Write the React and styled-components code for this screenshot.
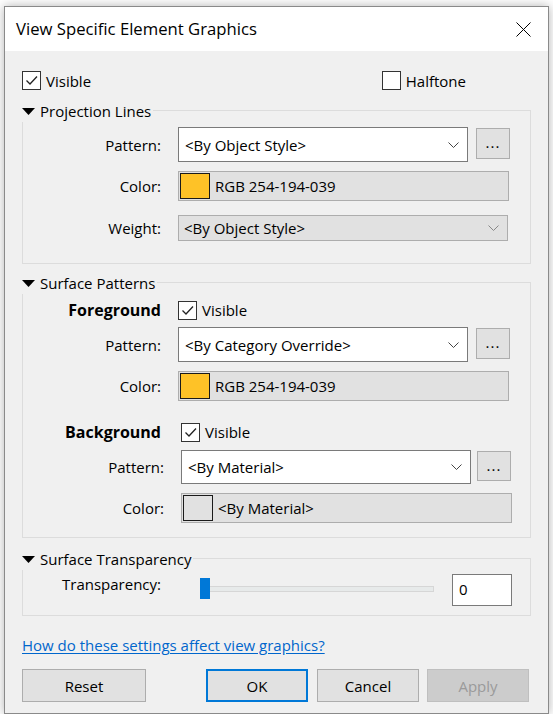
import React from 'react';
import styled, { createGlobalStyle } from 'styled-components';

const GlobalStyle = createGlobalStyle`
  html, body {
    margin: 0;
    padding: 0;
    background: #ffffff;
  }
  body {
    font-family: "Open Sans", "Noto Sans", sans-serif;
    font-size: 15px;
    color: #000;
  }
  * {
    box-sizing: border-box;
  }
`;

const Page = styled.div`
  padding: 6px 0 0 4px;
`;

const Window = styled.div`
  width: 545px;
  height: 708px;
  border: 1px solid #8a8a8a;
  background: #f0f0f0;
  box-shadow: 0 0 10px rgba(0, 0, 0, 0.3);
  display: flex;
  flex-direction: column;
`;

const TitleBar = styled.div`
  height: 44px;
  background: #fff;
  display: flex;
  align-items: center;
  justify-content: space-between;
  padding: 0 17px 0 11px;
  line-height: 20px;
`;

const Title = styled.span`
  font-size: 16.7px;
`;

const Body = styled.div`
  flex: 1;
  padding: 20px 17px 0 17px;
`;

const TopRow = styled.div`
  display: flex;
  align-items: center;
  height: 19px;
`;

const CheckItem = styled.label`
  display: flex;
  align-items: center;
  gap: 5px;
  line-height: 20px;
  margin-left: ${p => (p.$push ? 'auto' : '0')};
  margin-right: ${p => p.$right || 0}px;
`;

const Box = styled.span`
  width: 19px;
  height: 19px;
  border: 1px solid #333;
  background: #fff;
  display: flex;
  align-items: center;
  justify-content: center;
  flex-shrink: 0;
`;

const Group = styled.div`
  margin-top: ${p => p.$top}px;
  border: 1px solid #dcdcdc;
  padding-bottom: ${p => p.$bottom}px;
`;

const Legend = styled.div`
  display: flex;
  align-items: center;
  gap: 5px;
  width: fit-content;
  height: 22px;
  margin: -11px 0 0 -1px;
  padding-right: 2px;
  background: #f0f0f0;
  line-height: 20px;
`;

const Row = styled.div`
  display: flex;
  align-items: center;
  margin-top: ${p => p.$top}px;
`;

const Label = styled.div`
  width: ${p => p.$w || 138}px;
  flex-shrink: 0;
  margin-right: ${p => (p.$gap === undefined ? 17 : p.$gap)}px;
  text-align: right;
  line-height: 20px;
  font-size: ${p => (p.$bold ? 16 : 15)}px;
  font-weight: ${p => (p.$bold ? 700 : 400)};
  align-self: ${p => (p.$top ? 'flex-start' : 'center')};
`;

const Select = styled.div`
  display: flex;
  align-items: center;
  justify-content: space-between;
  width: ${p => p.$w}px;
  height: ${p => p.$h}px;
  padding: 0 8px 0 ${p => (p.$disabled ? 5 : 6)}px;
  background: ${p => (p.$disabled ? '#e1e1e1' : '#fff')};
  border: 1px solid ${p => (p.$disabled ? '#adadad' : '#7a7a7a')};
  line-height: 20px;
  white-space: nowrap;
`;

const MoreButton = styled.button`
  width: 34px;
  height: ${p => p.$h}px;
  margin-left: ${p => p.$gap}px;
  align-self: flex-start;
  margin-top: 1px;
  padding: 0 0 3px;
  background: #e1e1e1;
  border: 1px solid #adadad;
  font: inherit;
  font-size: 15px;
  letter-spacing: 1px;
  color: #000;
`;

const ColorField = styled.div`
  display: flex;
  align-items: center;
  gap: 5px;
  width: 331px;
  height: 30px;
  padding: 0 1px;
  background: #e1e1e1;
  border: 1px solid #adadad;
  line-height: 20px;
`;

const Swatch = styled.span`
  width: 30px;
  height: 26px;
  border: 1px solid #1a1a1a;
  background: ${p => p.$color};
  flex-shrink: 0;
`;

const Slider = styled.div`
  position: relative;
  align-self: flex-start;
  width: 234px;
  height: 21px;
  margin: 4px 0 0 22px;
`;

const Track = styled.div`
  margin-top: 8px;
  height: 6px;
  background: #e7eaea;
  border: 1px solid #d6d6d6;
`;

const Thumb = styled.div`
  position: absolute;
  left: 0;
  top: 0;
  width: 10px;
  height: 21px;
  background: #0078d7;
`;

const NumberBox = styled.div`
  width: 60px;
  height: 32px;
  margin-left: 18px;
  padding: 4px 6px;
  background: #fff;
  border: 1px solid #7a7a7a;
  line-height: 20px;
`;

const HelpLink = styled.a`
  display: block;
  width: fit-content;
  margin-top: 19px;
  line-height: 20px;
  color: #0066cc;
  text-decoration: underline;
  text-underline-offset: 2px;
`;

const ButtonRow = styled.div`
  display: flex;
  margin-top: 14px;
`;

const Button = styled.button`
  width: ${p => p.$w || 102}px;
  height: 33px;
  margin-left: ${p => p.$gap || 0}px;
  font: inherit;
  color: ${p => (p.$disabled ? '#9a9a9a' : '#000')};
  background: ${p => (p.$disabled ? '#cccccc' : '#e1e1e1')};
  border: ${p => (p.$primary ? '2px solid #0078d7' : `1px solid ${p.$disabled ? '#bfbfbf' : '#adadad'}`)};
  padding: 0;
`;

const CloseIcon = () => (
  <svg width="15" height="15" viewBox="0 0 15 15">
    <path d="M0.5 0.5 L14.5 14.5 M14.5 0.5 L0.5 14.5" stroke="#000" strokeWidth="1" fill="none" />
  </svg>
);

const Tick = () => (
  <svg width="15" height="15" viewBox="0 0 15 15">
    <polyline points="2.5,7.5 6,11 13,3.5" stroke="#222" strokeWidth="1.3" fill="none" />
  </svg>
);

const Triangle = () => (
  <svg width="13" height="7" viewBox="0 0 13 7">
    <polygon points="0,0 13,0 6.5,7" fill="#000" />
  </svg>
);

const Chevron = ({ color = '#444' }) => (
  <svg width="11" height="6" viewBox="0 0 11 6">
    <polyline points="0.5,0.5 5.5,5.5 10.5,0.5" stroke={color} strokeWidth="1" fill="none" />
  </svg>
);

const Check = ({ checked, children, ...rest }) => (
  <CheckItem {...rest}>
    <Box>{checked && <Tick />}</Box>
    {children}
  </CheckItem>
);

const Section = ({ title, top, bottom, children }) => (
  <Group $top={top} $bottom={bottom}>
    <Legend>
      <Triangle />
      {title}
    </Legend>
    {children}
  </Group>
);

const YELLOW = 'rgb(254, 194, 39)';

export default function App() {
  return (
    <>
      <GlobalStyle />
      <Page>
        <Window>
          <TitleBar>
            <Title>View Specific Element Graphics</Title>
            <CloseIcon />
          </TitleBar>
          <Body>
            <TopRow>
              <Check checked>Visible</Check>
              <Check $push $right={65}>Halftone</Check>
            </TopRow>

            <Section title="Projection Lines" top={20} bottom={22}>
              <Row $top={5}>
                <Label>Pattern:</Label>
                <Select $w={290} $h={35}>
                  &lt;By Object Style&gt;
                  <Chevron />
                </Select>
                <MoreButton $h={31} $gap={8}>...</MoreButton>
              </Row>
              <Row $top={9}>
                <Label>Color:</Label>
                <ColorField>
                  <Swatch $color={YELLOW} />
                  RGB 254-194-039
                </ColorField>
              </Row>
              <Row $top={14}>
                <Label>Weight:</Label>
                <Select $w={330} $h={26} $disabled>
                  &lt;By Object Style&gt;
                  <Chevron color="#888" />
                </Select>
              </Row>
            </Section>

            <Section title="Surface Patterns" top={18} bottom={14}>
              <Row $top={6}>
                <Label $bold>Foreground</Label>
                <Check checked>Visible</Check>
              </Row>
              <Row $top={7}>
                <Label>Pattern:</Label>
                <Select $w={290} $h={35}>
                  &lt;By Category Override&gt;
                  <Chevron />
                </Select>
                <MoreButton $h={31} $gap={8}>...</MoreButton>
              </Row>
              <Row $top={9}>
                <Label>Color:</Label>
                <ColorField>
                  <Swatch $color={YELLOW} />
                  RGB 254-194-039
                </ColorField>
              </Row>
              <Row $top={21}>
                <Label $bold $gap={20}>Background</Label>
                <Check checked>Visible</Check>
              </Row>
              <Row $top={8}>
                <Label $w={141}>Pattern:</Label>
                <Select $w={290} $h={34}>
                  &lt;By Material&gt;
                  <Chevron />
                </Select>
                <MoreButton $h={30} $gap={6}>...</MoreButton>
              </Row>
              <Row $top={9}>
                <Label $w={141}>Color:</Label>
                <ColorField>
                  <Swatch $color="#e1e1e1" />
                  &lt;By Material&gt;
                </ColorField>
              </Row>
            </Section>

            <Section title="Surface Transparency" top={20} bottom={9}>
              <Row $top={4}>
                <Label $top>Transparency:</Label>
                <Slider>
                  <Track />
                  <Thumb />
                </Slider>
                <NumberBox>0</NumberBox>
              </Row>
            </Section>

            <HelpLink href="#">How do these settings affect view graphics?</HelpLink>

            <ButtonRow>
              <Button $w={124}>Reset</Button>
              <Button $gap={60} $primary>OK</Button>
              <Button $gap={9}>Cancel</Button>
              <Button $gap={8} $disabled>Apply</Button>
            </ButtonRow>
          </Body>
        </Window>
      </Page>
    </>
  );
}
